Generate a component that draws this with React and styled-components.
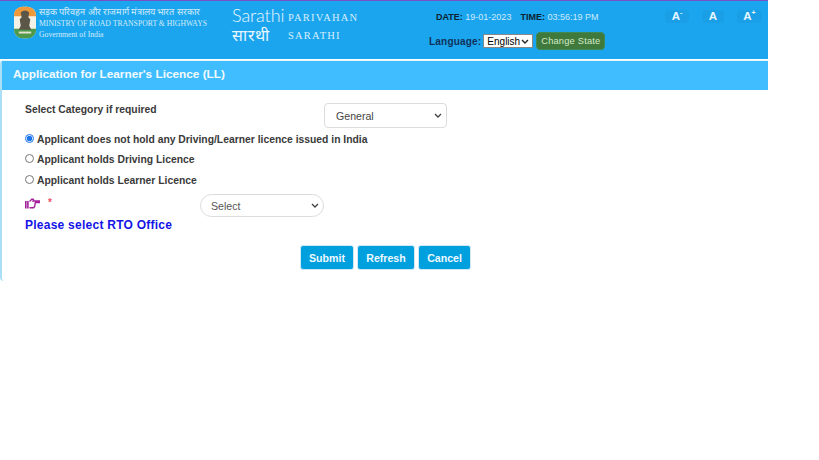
import React from 'react'
import styled, { createGlobalStyle } from 'styled-components'

const chevron = color => `url("data:image/svg+xml,%3Csvg xmlns='http://www.w3.org/2000/svg' width='8' height='5'%3E%3Cpath d='M1 1l3 3 3-3' fill='none' stroke='%23${color}' stroke-width='1.400'/%3E%3C/svg%3E")`

const Global = createGlobalStyle`
html, body {
  margin: 0;
  padding: 0;
  background: #fff;
  font-family: "Liberation Sans", Arial, sans-serif;
}
`
const Page = styled.div`
width: 768px;
height: 281px;
display: flex;
flex-direction: column;
`
const Header = styled.header`
height: 59px;
box-sizing: border-box;
border-top: 1px solid #7a4fc4;
background: #1ba5ee;
display: flex;
`
const MinistryBlock = styled.div`
width: 232px;
padding: 5px 0 0 14px;
box-sizing: border-box;
display: flex;
gap: 3px;
`
const Emblem = styled.svg`
width: 22px;
height: 33px;
flex: none;
`
const MinistryText = styled.div`
font-family: "Liberation Serif", serif;
font-size: 7.7px;
line-height: 11px;
padding-top: 1px;
color: #d4ecfb;
white-space: nowrap;
`
const MinistryHindi = styled.div`
font-size: 9.2px;
`
const LogoBlock = styled.div`
width: 169px;
padding-top: 3px;
display: flex;
gap: 4px;
`
const LogoWords = styled.div`
width: 52px;
color: #e8f6ff;
display: flex;
flex-direction: column;
`
const LogoLatin = styled.span`
font-family: Lato, sans-serif;
font-weight: 300;
font-size: 18px;
line-height: 22px;
letter-spacing: -0.1px;
`
const LogoHindi = styled.span`
font-family: "Liberation Serif", serif;
font-size: 16px;
line-height: 20px;
letter-spacing: 0.6px;
`
const LogoName = styled.div`
font-family: "Liberation Serif", serif;
font-size: 10.5px;
line-height: 17.5px;
letter-spacing: 1.2px;
color: #d8effc;
padding-top: 5px;
`
const Center = styled.div`
width: 216px;
display: flex;
flex-direction: column;
`
const DateRow = styled.div`
padding: 10px 0 0 35px;
font-size: 9px;
line-height: 12px;
color: #cdeafc;
white-space: nowrap;
`
const DateLabel = styled.b`
color: #0c2233;
margin-left: ${p => p.$gap || 0}px;
`
const LangRow = styled.div`
margin-top: 9px;
padding-left: 28px;
display: flex;
align-items: center;
`
const LangLabel = styled.span`
font-size: 10px;
font-weight: bold;
letter-spacing: 0.2px;
color: #10325a;
margin-right: 2px;
`
const LangSelect = styled.select`
appearance: none;
width: 50px;
height: 14px;
padding: 0 0 0 3px;
border: 1px solid #888;
background: #fff ${chevron('222')} no-repeat right 3px center;
font-family: "Liberation Sans", sans-serif;
font-size: 10px;
color: #000;
margin-right: 3px;
`
const StateButton = styled.button`
width: 69px;
height: 18px;
padding: 0;
border: 1px solid #3d8a55;
border-radius: 4px;
background: #3f7a3c;
color: #d5e8c9;
font-family: "Liberation Sans", sans-serif;
font-size: 9.3px;
letter-spacing: 0.2px;
white-space: nowrap;
`
const SizeGroup = styled.div`
padding: 9px 0 0 48px;
display: flex;
gap: 13px;
align-items: flex-start;
`
const SizeButton = styled.div`
width: ${p => p.$w}px;
height: 13px;
border-radius: 4px;
background: #1a9fe6;
color: #e8f6ff;
font-size: 11.5px;
font-weight: bold;
line-height: 13px;
text-align: center;
`
const Sup = styled.sup`
font-size: 7px;
line-height: 0;
`
const Panel = styled.section`
flex: 1;
margin-top: 1px;
display: flex;
flex-direction: column;
border-left: 2px solid #a9dff7;
border-radius: 4px 0 0 4px;
box-sizing: border-box;
`
const PanelHeading = styled.h1`
margin: 0;
height: 30px;
padding-left: 11px;
background: #40bdff;
color: #f4fbff;
font-size: 11.8px;
font-weight: bold;
line-height: 27px;
border-top: 1px solid #e5f5fd;
box-sizing: border-box;
`
const Body = styled.div`
padding: 13px 0 0 23px;
flex: 1;
`
const CategoryRow = styled.div`
display: flex;
align-items: flex-start;
height: 26px;
margin-bottom: 4px;
`
const Label = styled.label`
font-size: 10.35px;
font-weight: bold;
color: #3a3a3a;
line-height: 13px;
`
const CategoryLabel = styled(Label)`
width: 299px;
`
const FieldSelect = styled.select`
appearance: none;
width: 123px;
height: 25px;
padding: 0 11px;
background: #fff ${chevron('444')} no-repeat right 4px center;
border: 1px solid #dcdcdc;
border-radius: 4px;
font-family: "Liberation Sans", sans-serif;
font-size: 10.6px;
color: #444;
`
const RadioRow = styled.div`
display: flex;
align-items: center;
height: 13px;
margin-bottom: ${p => p.$mb}px;
`
const Radio = styled.input`
width: 9px;
height: 9px;
margin: 0 3px 2px 0;
accent-color: #1a73e8;
`
const OfficeRow = styled.div`
display: flex;
align-items: flex-start;
margin-top: 7px;
`
const OfficeLeft = styled.div`
width: 175px;
padding-top: 3px;
`
const HandLine = styled.div`
display: flex;
align-items: center;
gap: 8px;
height: 12px;
`
const Star = styled.span`
color: #f0506a;
font-size: 10px;
line-height: 12px;
font-weight: bold;
`
const Hint = styled.div`
margin-top: 9px;
font-size: 12px;
font-weight: bold;
line-height: 14px;
color: #1414e6;
letter-spacing: 0.25px;
`
const RoundSelect = styled(FieldSelect)`
height: 23px;
width: 124px;
border-radius: 12px;
padding: 0 10px;
color: #555;
`
const Actions = styled.div`
display: flex;
gap: 3px;
margin: 13px 0 0 275px;
`
const ActionButton = styled.button`
height: 25px;
width: ${p => p.$w}px;
padding: 0;
border: 1px solid #cfe9f7;
border-radius: 3px;
background: #00a0df;
color: #eef9ff;
font-family: "Liberation Sans", sans-serif;
font-size: 10.6px;
font-weight: bold;
`

function AshokaBadge () {
  return (
    <Emblem viewBox='0 0 23 33'>
      <rect x='0' y='0' width='23' height='33' rx='9' fill='#f4f1e6' />
      <path d='M0 10 A9 9 0 0 1 9 0 H14 A9 9 0 0 1 23 9 V10 Z' fill='#ee9a3c' />
      <path d='M0 23 H23 A9 9 0 0 1 14 33 H9 A9 9 0 0 1 0 24 Z' fill='#4f9a4a' />
      <path d='M7 6 Q11.500 2 16 6 L15 11 L17 13 L16 20 L18 24 H5 L7 20 L6 13 L8 11 Z' fill='#5b5648' />
      <rect x='5' y='26' width='13' height='2' fill='#e6e2d2' />
    </Emblem>
  )
}

function HandIcon () {
  return (
    <svg width='15' height='11' viewBox='0 0 15 11' fill='none' stroke='#a3209a' strokeWidth='1.400'>
      <path d='M0.800 3 V10.500 M2.900 3 V10.500' strokeWidth='1.600' />
      <path d='M4.500 3.500 L7 1 L8.500 1.500 L8 3 H14.500 V4.500 H10 M10 4.500 Q10.500 8.500 8.500 9.800 H4.500' />
    </svg>
  )
}

export default function App () {
  return (
    <Page>
      <Global />
      <Header>
        <MinistryBlock>
          <AshokaBadge />
          <MinistryText>
            <MinistryHindi>सड़क परिवहन और राजमार्ग मंत्रालय भारत सरकार</MinistryHindi>
            <div>MINISTRY OF ROAD TRANSPORT &amp; HIGHWAYS</div>
            <div>Government of India</div>
          </MinistryText>
        </MinistryBlock>
        <LogoBlock>
          <LogoWords>
            <LogoLatin>Sarathi</LogoLatin>
            <LogoHindi>सारथी</LogoHindi>
          </LogoWords>
          <LogoName>PARIVAHAN<br />SARATHI</LogoName>
        </LogoBlock>
        <Center>
          <DateRow>
            <DateLabel>DATE:</DateLabel> 19-01-2023
            <DateLabel $gap={9}>TIME:</DateLabel> 03:56:19 PM
          </DateRow>
          <LangRow>
            <LangLabel>Language:</LangLabel>
            <LangSelect defaultValue='en'><option value='en'>English</option></LangSelect>
            <StateButton>Change State</StateButton>
          </LangRow>
        </Center>
        <SizeGroup>
          <SizeButton $w={24}>A<Sup>-</Sup></SizeButton>
          <SizeButton $w={22}>A</SizeButton>
          <SizeButton $w={25}>A<Sup>+</Sup></SizeButton>
        </SizeGroup>
      </Header>
      <Panel>
        <PanelHeading>Application for Learner's Licence (LL)</PanelHeading>
        <Body>
          <CategoryRow>
            <CategoryLabel>Select Category if required</CategoryLabel>
            <FieldSelect defaultValue='g'><option value='g'>General</option></FieldSelect>
          </CategoryRow>
          <RadioRow $mb={7}>
            <Radio type='radio' name='lic' defaultChecked />
            <Label>Applicant does not hold any Driving/Learner licence issued in India</Label>
          </RadioRow>
          <RadioRow $mb={8}>
            <Radio type='radio' name='lic' />
            <Label>Applicant holds Driving Licence</Label>
          </RadioRow>
          <RadioRow $mb={0}>
            <Radio type='radio' name='lic' />
            <Label>Applicant holds Learner Licence</Label>
          </RadioRow>
          <OfficeRow>
            <OfficeLeft>
              <HandLine><HandIcon /><Star>*</Star></HandLine>
              <Hint>Please select RTO Office</Hint>
            </OfficeLeft>
            <RoundSelect defaultValue='s'><option value='s'>Select</option></RoundSelect>
          </OfficeRow>
          <Actions>
            <ActionButton $w={54}>Submit</ActionButton>
            <ActionButton $w={58}>Refresh</ActionButton>
            <ActionButton $w={53}>Cancel</ActionButton>
          </Actions>
        </Body>
      </Panel>
    </Page>
  )
}
